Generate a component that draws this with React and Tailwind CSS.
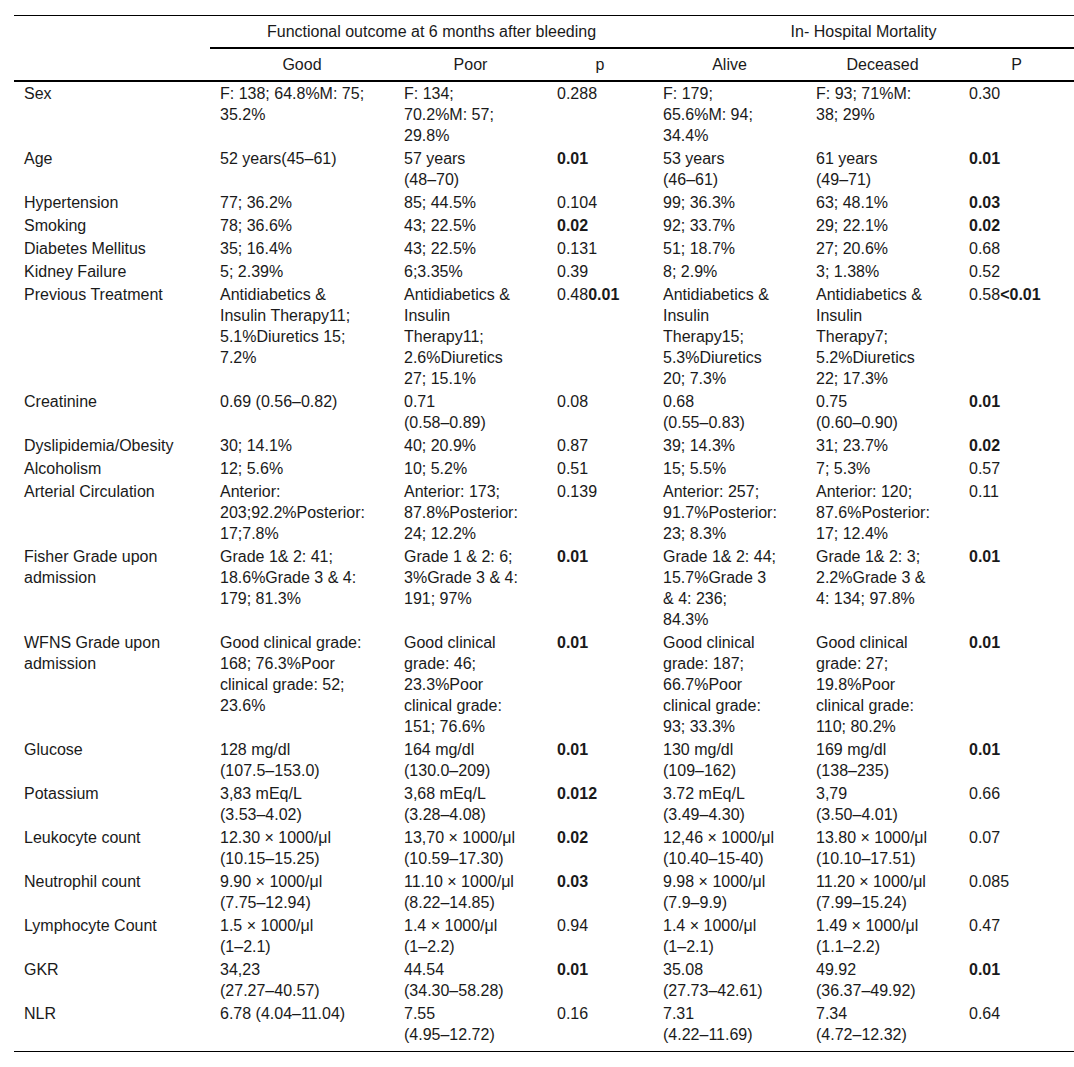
import React from "react"

// each cell is a list of lines; a line is a string or a node
const B = ({ children }) => <span className="font-bold">{children}</span>

const rows = [
  ["Sex", ["F: 138; 64.8%M: 75;", "35.2%"], ["F: 134;", "70.2%M: 57;", "29.8%"], ["0.288"], ["F: 179;", "65.6%M: 94;", "34.4%"], ["F: 93; 71%M:", "38; 29%"], ["0.30"]],
  ["Age", ["52 years(45–61)"], ["57 years", "(48–70)"], [<B>0.01</B>], ["53 years", "(46–61)"], ["61 years", "(49–71)"], [<B>0.01</B>]],
  ["Hypertension", ["77; 36.2%"], ["85; 44.5%"], ["0.104"], ["99; 36.3%"], ["63; 48.1%"], [<B>0.03</B>]],
  ["Smoking", ["78; 36.6%"], ["43; 22.5%"], [<B>0.02</B>], ["92; 33.7%"], ["29; 22.1%"], [<B>0.02</B>]],
  ["Diabetes Mellitus", ["35; 16.4%"], ["43; 22.5%"], ["0.131"], ["51; 18.7%"], ["27; 20.6%"], ["0.68"]],
  ["Kidney Failure", ["5; 2.39%"], ["6;3.35%"], ["0.39"], ["8; 2.9%"], ["3; 1.38%"], ["0.52"]],
  [
    "Previous Treatment",
    ["Antidiabetics &", "Insulin Therapy11;", "5.1%Diuretics 15;", "7.2%"],
    ["Antidiabetics &", "Insulin", "Therapy11;", "2.6%Diuretics", "27; 15.1%"],
    [<>0.48<B>0.01</B></>],
    ["Antidiabetics &", "Insulin", "Therapy15;", "5.3%Diuretics", "20; 7.3%"],
    ["Antidiabetics &", "Insulin", "Therapy7;", "5.2%Diuretics", "22; 17.3%"],
    [<>0.58<B>&lt;0.01</B></>],
  ],
  ["Creatinine", ["0.69 (0.56–0.82)"], ["0.71", "(0.58–0.89)"], ["0.08"], ["0.68", "(0.55–0.83)"], ["0.75", "(0.60–0.90)"], [<B>0.01</B>]],
  ["Dyslipidemia/Obesity", ["30; 14.1%"], ["40; 20.9%"], ["0.87"], ["39; 14.3%"], ["31; 23.7%"], [<B>0.02</B>]],
  ["Alcoholism", ["12; 5.6%"], ["10; 5.2%"], ["0.51"], ["15; 5.5%"], ["7; 5.3%"], ["0.57"]],
  [
    "Arterial Circulation",
    ["Anterior:", "203;92.2%Posterior:", "17;7.8%"],
    ["Anterior: 173;", "87.8%Posterior:", "24; 12.2%"],
    ["0.139"],
    ["Anterior: 257;", "91.7%Posterior:", "23; 8.3%"],
    ["Anterior: 120;", "87.6%Posterior:", "17; 12.4%"],
    ["0.11"],
  ],
  [
    ["Fisher Grade upon", "admission"],
    ["Grade 1& 2: 41;", "18.6%Grade 3 & 4:", "179; 81.3%"],
    ["Grade 1 & 2: 6;", "3%Grade 3 & 4:", "191; 97%"],
    [<B>0.01</B>],
    ["Grade 1& 2: 44;", "15.7%Grade 3", "& 4: 236;", "84.3%"],
    ["Grade 1& 2: 3;", "2.2%Grade 3 &", "4: 134; 97.8%"],
    [<B>0.01</B>],
  ],
  [
    ["WFNS Grade upon", "admission"],
    ["Good clinical grade:", "168; 76.3%Poor", "clinical grade: 52;", "23.6%"],
    ["Good clinical", "grade: 46;", "23.3%Poor", "clinical grade:", "151; 76.6%"],
    [<B>0.01</B>],
    ["Good clinical", "grade: 187;", "66.7%Poor", "clinical grade:", "93; 33.3%"],
    ["Good clinical", "grade: 27;", "19.8%Poor", "clinical grade:", "110; 80.2%"],
    [<B>0.01</B>],
  ],
  ["Glucose", ["128 mg/dl", "(107.5–153.0)"], ["164 mg/dl", "(130.0–209)"], [<B>0.01</B>], ["130 mg/dl", "(109–162)"], ["169 mg/dl", "(138–235)"], [<B>0.01</B>]],
  ["Potassium", ["3,83 mEq/L", "(3.53–4.02)"], ["3,68 mEq/L", "(3.28–4.08)"], [<B>0.012</B>], ["3.72 mEq/L", "(3.49–4.30)"], ["3,79", "(3.50–4.01)"], ["0.66"]],
  ["Leukocyte count", ["12.30 × 1000/μl", "(10.15–15.25)"], ["13,70 × 1000/μl", "(10.59–17.30)"], [<B>0.02</B>], ["12,46 × 1000/μl", "(10.40–15-40)"], ["13.80 × 1000/μl", "(10.10–17.51)"], ["0.07"]],
  ["Neutrophil count", ["9.90 × 1000/μl", "(7.75–12.94)"], ["11.10 × 1000/μl", "(8.22–14.85)"], [<B>0.03</B>], ["9.98 × 1000/μl", "(7.9–9.9)"], ["11.20 × 1000/μl", "(7.99–15.24)"], ["0.085"]],
  ["Lymphocyte Count", ["1.5 × 1000/μl", "(1–2.1)"], ["1.4 × 1000/μl", "(1–2.2)"], ["0.94"], ["1.4 × 1000/μl", "(1–2.1)"], ["1.49 × 1000/μl", "(1.1–2.2)"], ["0.47"]],
  ["GKR", ["34,23", "(27.27–40.57)"], ["44.54", "(34.30–58.28)"], [<B>0.01</B>], ["35.08", "(27.73–42.61)"], ["49.92", "(36.37–49.92)"], [<B>0.01</B>]],
  ["NLR", ["6.78 (4.04–11.04)"], ["7.55", "(4.95–12.72)"], ["0.16"], ["7.31", "(4.22–11.69)"], ["7.34", "(4.72–12.32)"], ["0.64"]],
]

function Lines({ lines }) {
  const list = Array.isArray(lines) ? lines : [lines]
  return list.map((l, i) => (
    <div key={i} className="whitespace-nowrap">
      {l}
    </div>
  ))
}

export default function App() {
  return (
    <div className="min-h-screen bg-white pt-[15px] pl-[14px] font-['Liberation_Sans',Arial,sans-serif] text-[16px] leading-[21px] text-[#1a1a1a]">
      <table className="w-[1060px] table-fixed border-separate border-spacing-0">
        <colgroup>
          <col className="w-[196px]" />
          <col className="w-[184px]" />
          <col className="w-[153px]" />
          <col className="w-[106px]" />
          <col className="w-[153px]" />
          <col className="w-[153px]" />
          <col className="w-[115px]" />
        </colgroup>
        <thead>
          <tr>
            <th className="border-t border-black py-[5px]" />
            <th colSpan={3} className="border-t border-b-2 border-black px-[10px] py-[5px] text-center font-normal">
              Functional outcome at 6 months after bleeding
            </th>
            <th colSpan={3} className="border-t border-b-2 border-black px-[10px] py-[5px] text-center font-normal">
              In- Hospital Mortality
            </th>
          </tr>
          <tr>
            <th className="border-b-2 border-black py-[5px]" />
            {["Good", "Poor", "p", "Alive", "Deceased", "P"].map((h) => (
              <th key={h} className="border-b-2 border-black px-[10px] py-[5px] text-center font-normal">
                {h}
              </th>
            ))}
          </tr>
        </thead>
        <tbody>
          {rows.map((r, ri) => {
            const last = ri === rows.length - 1
            return (
              <tr key={ri}>
                {r.map((c, ci) => (
                  <td
                    key={ci}
                    className={`px-[10px] pt-px align-top text-left ${last ? "border-b border-black pb-[6px]" : "pb-px"}`}
                  >
                    <Lines lines={c} />
                  </td>
                ))}
              </tr>
            )
          })}
        </tbody>
      </table>
    </div>
  )
}
